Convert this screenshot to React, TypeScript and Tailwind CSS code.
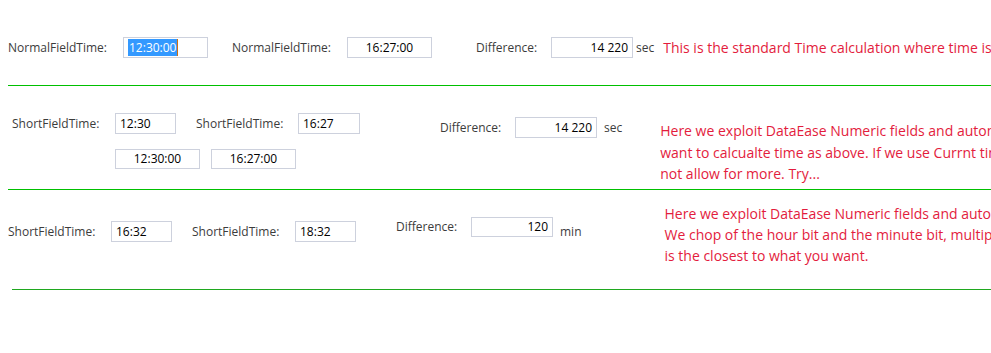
import React from "react";

const font = { fontFamily: '"Open Sans", "Noto Sans", sans-serif' };

function Box({ w, align = "center", children, h = "h-[21px]" }: { w: string; align?: "left" | "center" | "right"; children: React.ReactNode; h?: string }) {
  const al = align === "left" ? "justify-start pl-[4px]" : align === "right" ? "justify-end pr-[4px]" : "justify-center";
  return (
    <div className={`${w} ${h} ${al} shrink-0 flex items-center border border-[#cdd1dd] bg-white text-[12px] text-black`}>
      {children}
    </div>
  );
}

const Label = ({ children, cls = "" }: { children: React.ReactNode; cls?: string }) => (
  <div className={`shrink-0 whitespace-nowrap text-[12px] text-[#3c3c3c] ${cls}`}>{children}</div>
);

export default function App() {
  return (
    <div className="w-[991px] h-[353px] overflow-hidden bg-white" style={font}>
      {/* Section 1 */}
      <div className="h-[85px] pt-[37px]">
        <div className="flex items-center h-[21px] w-full">
          <Label cls="ml-[8px] w-[115px]">NormalFieldTime:</Label>
          <Box w="w-[85px]" align="left">
            <span className="bg-[#3399ff] text-white leading-[17px] h-[17px] px-[1px] border-r border-[#d07010]">12:30:00</span>
          </Box>
          <Label cls="ml-[24px] w-[115px]">NormalFieldTime:</Label>
          <Box w="w-[85px]">16:27:00</Box>
          <Label cls="ml-[44px] w-[75px]">Difference:</Label>
          <Box w="w-[82px]" align="right">14 220</Box>
          <Label cls="ml-[3px]">sec</Label>
          <div className="ml-[9px] whitespace-nowrap text-[14px] text-[#e31c3d]">
            This is the standard Time calculation where time is calculated in seconds
          </div>
        </div>
      </div>
      <div className="ml-[8px] h-[1px] bg-[#00c000]" />

      {/* Section 2 */}
      <div className="h-[103px] flex items-start">
        <div className="flex flex-col shrink-0">
          <div className="mt-[27px] flex items-center h-[21px]">
            <Label cls="ml-[12px] w-[103px]">ShortFieldTime:</Label>
            <Box w="w-[61px]" align="left">12:30</Box>
            <Label cls="ml-[20px] w-[102px]">ShortFieldTime:</Label>
            <Box w="w-[62px]" align="left">16:27</Box>
          </div>
          <div className="mt-[15px] flex items-center h-[20px]">
            <div className="ml-[115px]">
              <Box w="w-[85px]" h="h-[20px]">12:30:00</Box>
            </div>
            <div className="ml-[11px]">
              <Box w="w-[85px]" h="h-[20px]">16:27:00</Box>
            </div>
          </div>
        </div>
        <div className="mt-[31px] ml-[80px] flex items-center h-[21px] shrink-0">
          <Label cls="w-[75px]">Difference:</Label>
          <Box w="w-[82px]" align="right">14 220</Box>
          <Label cls="ml-[7px]">sec</Label>
        </div>
        <div className="mt-[34px] ml-[38px] whitespace-nowrap text-[14px] leading-[21.5px] text-[#e31c3d]">
          <div>Here we exploit DataEase Numeric fields and automatically convert them if you</div>
          <div>want to calcualte time as above. If we use Currnt time only hours and minutes it will</div>
          <div>not allow for more. Try...</div>
        </div>
      </div>
      <div className="ml-[8px] h-[1px] bg-[#00c000]" />

      {/* Section 3 */}
      <div className="h-[99px] flex items-start">
        <div className="mt-[31px] flex items-center h-[21px] shrink-0">
          <Label cls="ml-[8px] w-[103px]">ShortFieldTime:</Label>
          <Box w="w-[61px]" align="left">16:32</Box>
          <Label cls="ml-[20px] w-[103px]">ShortFieldTime:</Label>
          <Box w="w-[61px]" align="left">18:32</Box>
        </div>
        <div className="mt-[27px] ml-[40px] flex items-center h-[20px] shrink-0">
          <Label cls="w-[75px]">Difference:</Label>
          <Box w="w-[82px]" h="h-[20px]" align="right">120</Box>
          <Label cls="ml-[7px] mt-[10px]">min</Label>
        </div>
        <div className="mt-[13px] ml-[83px] whitespace-nowrap text-[14px] leading-[21px] text-[#e31c3d]">
          <div>Here we exploit DataEase Numeric fields and automatically convert them.</div>
          <div>We chop of the hour bit and the minute bit, multiply the hour by 60 and add. This</div>
          <div>is the closest to what you want.</div>
        </div>
      </div>
      <div className="ml-[12px] h-[1px] bg-[#1fa81f]" />
    </div>
  );
}
